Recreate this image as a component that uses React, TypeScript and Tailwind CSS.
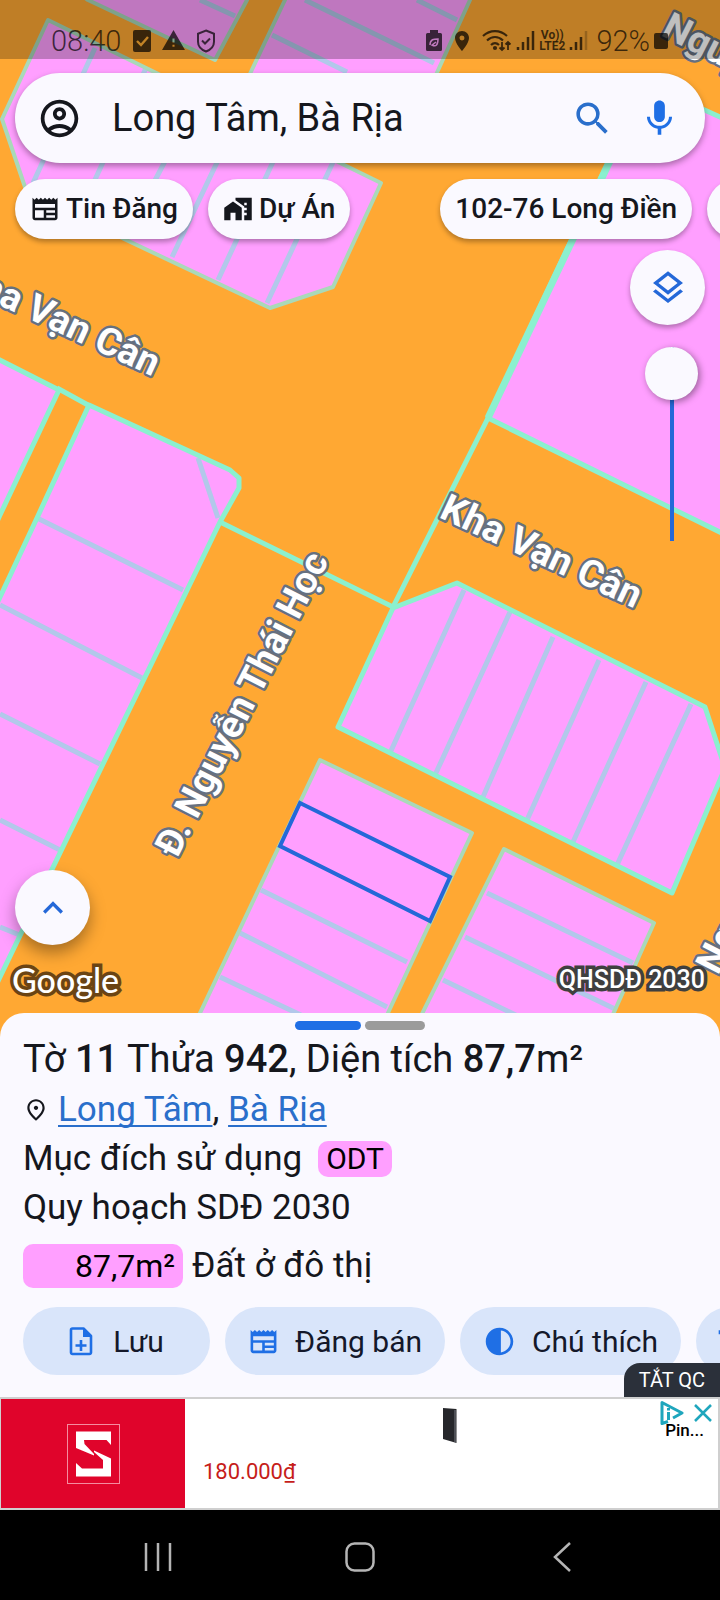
import type { ReactNode } from "react";
import {
  MdContrast,
  MdHomeWork,
  MdKeyboardArrowUp,
  MdLocationOn,
  MdMic,
  MdNewspaper,
  MdOutlineAccountCircle,
  MdOutlineLayers,
  MdOutlinePlace,
  MdSearch,
  MdTitle,
  MdWarning,
} from "react-icons/md";

type Block = { points: string; plots: string };

// blocks that touch a main road get the bright outline
const mainBlocks: Block[] = [
  { points: "645,83 740,126 740,542 488,418", plots: "" },
  { points: "-20,350 59,390 0,515 -20,558", plots: "" },
  {
    points: "89,405 230,470 239,478 239,488 220,522 0,977 -20,1018 -20,640 37,518",
    plots:
      "M198 458L218 518M37 518L183 590M0 605L142 678M0 714L100 764M0 820L60 850M0 927L22 936",
  },
  {
    points: "393,608 457,583 705,707 725,768 672,893 338,727",
    plots:
      "M464 590L390 753M510 612L435 775M553 637L483 797M599 660L527 820M646 682L573 842M691 704L617 865",
  },
];

const innerBlocks: Block[] = [
  { points: "88,0 215,60 247,0 247,-20 60,-20", plots: "M200 0L235 16" },
  {
    points: "285,0 248,78 430,88 470,0 470,-20 290,-20",
    plots: "M305 0L434 63M272 35L347 72M417 0L457 20",
  },
  {
    points: "48,20 381,183 333,287 270,308 27,193 2,119",
    plots:
      "M33 183L95 48M88 195L146 68M126 236L200 94M172 257L240 114M218 280L285 136M267 303L334 160",
  },
  {
    points: "320,760 472,833 380,1030 192,1030",
    plots: "M261 890L407 962M240 933L387 1007M220 977L320 1024",
  },
  {
    points: "504,849 654,923 606,1030 414,1030",
    plots: "M487 893L633 963M465 937L615 1009M443 980L530 1022",
  },
];

function BlockShape({ block, outline, width }: { block: Block; outline: string; width: number }) {
  return (
    <g fill="none" strokeLinejoin="round">
      <polygon points={block.points} fill="#ff9fff" />
      <path d={block.plots} stroke="#b2c8ea" strokeWidth={5} />
      <polygon points={block.points} stroke={outline} strokeWidth={width} />
    </g>
  );
}

function ParcelMap() {
  return (
    <svg
      className="absolute inset-0 size-full"
      viewBox="0 0 720 1037"
      preserveAspectRatio="xMidYMin slice"
      aria-label="Bản đồ quy hoạch"
    >
      <rect x="-400" width="1520" height="1037" fill="#ffa833" />
      {innerBlocks.map((block) => (
        <BlockShape key={block.points} block={block} outline="#a9d9b9" width={4} />
      ))}
      {mainBlocks.map((block) => (
        <BlockShape key={block.points} block={block} outline="#8bf0cf" width={5} />
      ))}
      <path
        d="M573 240L488 418L393 607L220 522M57 388L88 405"
        fill="none"
        stroke="#8bf0cf"
        strokeWidth="5"
      />
      <path d="M620 140L488 418" stroke="#8bf0cf" strokeWidth="7" />
      <polygon
        points="300,803 450,877 430,921 280,846"
        fill="none"
        stroke="#2468d8"
        strokeWidth="4"
      />
      <g
        fill="#fff"
        stroke="#667080"
        strokeWidth="5"
        strokeLinejoin="round"
        paintOrder="stroke"
        className="text-[38px] font-bold"
      >
        <text transform="translate(-44 285) rotate(25)">Kha Vạn Cân</text>
        <text transform="translate(438 517) rotate(25)">Kha Vạn Cân</text>
        <text transform="translate(177 859) rotate(-63)">Đ. Nguyễn Thái Học</text>
        <text transform="translate(660 35) rotate(27)">Nguyễn</text>
        <text transform="translate(718 976) rotate(-63)">Nguyễn</text>
      </g>
    </svg>
  );
}

function Signal({ weak }: { weak?: boolean }) {
  return (
    <svg viewBox="0 0 19 20" className="h-5 w-[19px]" fill="none" stroke="currentColor" strokeWidth="2.500">
      <path d="M2 16v3M7 11v8M12 6v13" />
      <path d="M17 0v19" opacity={weak ? 0.3 : 1} />
    </svg>
  );
}

function StatusBar() {
  return (
    <div className="flex h-[59px] items-center bg-black/25 pt-[22px] pr-[52px] pl-[51px] text-black/70">
      <time className="text-[29px] leading-9 font-light">08:40</time>
      <svg viewBox="0 0 18 22" className="ml-3 h-[22px] w-[18px]">
        <rect width="18" height="22" rx="2" fill="currentColor" />
        <path d="M4 11l4 4 7-8" fill="none" stroke="#c28326" strokeWidth="2.4" />
      </svg>
      <MdWarning className="ml-2.5 size-[25px]" />
      <svg viewBox="0 0 20 24" className="ml-2.5 h-6 w-5" fill="none" stroke="currentColor" strokeWidth="2">
        <path d="M10 1.5l8 3.2v8c0 4.600-3.400 8-8 9.800-4.600-1.800-8-5.200-8-9.800v-8z" />
        <path d="M6 11.500l3 3 5-5" />
      </svg>
      <div className="ml-auto flex items-center">
        <svg viewBox="0 0 16 21" className="h-[21px] w-4">
          <path d="M4 0h8v3h2.500a1.500 1.500 0 0 1 1.500 1.500v15a1.500 1.500 0 0 1-1.500 1.500h-13a1.500 1.500 0 0 1-1.500-1.500v-15A1.500 1.500 0 0 1 1.500 3H4z" fill="currentColor" />
          <path d="M4 15c0-6 4-6 8-6 0 6-2 8-6 6l4-3" fill="none" stroke="#c07abf" strokeWidth="1.500" />
        </svg>
        <MdLocationOn className="ml-2 size-6" />
        <svg viewBox="0 0 30 22" className="ml-2 h-[22px] w-[30px]" fill="none" stroke="currentColor" strokeWidth="2.200">
          <path d="M1 6c7-6.500 17-6.500 24 0M5 10.500c5-4.500 11-4.500 16 0M9 15c2.500-2.500 5.500-2.500 8 0" />
          <circle cx="13" cy="18" r="1" />
          <path d="M20 12v8M17.500 17.500l2.500 2.500 2.500-2.500M26 20v-8M23.500 14.500l2.500-2.500 2.500 2.500" strokeWidth="1.800" />
        </svg>
        <span className="ml-1">
          <Signal />
        </span>
        <span className="ml-1 flex flex-col items-center text-[12px] leading-[11px] font-bold">
          <span>Vo))</span>
          <span>LTE2</span>
        </span>
        <span className="ml-1">
          <Signal weak />
        </span>
        <span className="ml-2 text-[29px] leading-9 font-light">92%</span>
        <svg viewBox="0 0 14 16" className="ml-1 h-4 w-3.5">
          <rect width="14" height="16" rx="2" fill="currentColor" />
        </svg>
      </div>
    </div>
  );
}

function Chip({ className, children }: { className?: string; children?: ReactNode }) {
  return (
    <button
      type="button"
      className={`flex h-[60px] shrink-0 items-center gap-1.5 rounded-full bg-[#faf9ff] px-[15px] text-[28px] font-medium whitespace-nowrap shadow-[0_3px_5px_rgba(0,0,0,0.3)] ${className ?? ""}`}
    >
      {children}
    </button>
  );
}

function RoundButton({ label, className, children }: { label: string; className: string; children: ReactNode }) {
  return (
    <button
      type="button"
      aria-label={label}
      className={`flex size-[75px] items-center justify-center rounded-full bg-[#faf9ff] text-[#2468d8] ${className}`}
    >
      {children}
    </button>
  );
}

function ActionButton({ className, children }: { className?: string; children: ReactNode }) {
  return (
    <button
      type="button"
      className={`flex h-[68px] shrink-0 items-center justify-center gap-4 rounded-full bg-[#d9e5fa] px-[23px] text-[30px] whitespace-nowrap text-[#14182a] ${className ?? ""}`}
    >
      {children}
    </button>
  );
}

function NoteAddIcon() {
  return (
    <svg viewBox="0 0 24 30" className="mr-1 h-[30px] w-6" fill="none" stroke="#1f6fe5" strokeWidth="2.600">
      <path d="M14.500 2.500H3.500a1.500 1.500 0 0 0-1.500 1.500v22.500A1.500 1.500 0 0 0 3.500 28h17a1.500 1.500 0 0 0 1.500-1.500V10z" strokeLinejoin="round" />
      <path d="M14 2v9h8z" fill="#1f6fe5" stroke="none" />
      <path d="M12 14v11M6.500 19.500h11" />
    </svg>
  );
}

function ParcelSheet() {
  return (
    <section className="relative -mt-6 overflow-hidden rounded-t-3xl bg-[#faf9ff] pt-2 pb-[22px] pl-[23px] text-[35px] text-[#15171d]">
      <div className="flex justify-center gap-1 pr-[23px]">
        <span className="h-[9px] w-[66px] rounded-full bg-[#1f6fe5]" />
        <span className="h-[9px] w-[60px] rounded-full bg-[#9b9b9b]" />
      </div>
      <h1 className="mt-1 text-[38px] leading-[50px] whitespace-nowrap">
        Tờ <b className="font-medium">11</b> Thửa <b className="font-medium">942</b>, Diện tích{" "}
        <b className="font-medium">87,7</b>m²
      </h1>
      <p className="mt-px flex items-center leading-[49px]">
        <MdOutlinePlace className="mr-[9px] size-[26px]" />
        <span>
          <a href="#long-tam" className="text-[#2a6fcb] underline decoration-2 underline-offset-4 [text-decoration-skip-ink:none]">
            Long Tâm
          </a>
          ,{" "}
          <a href="#ba-ria" className="text-[#2a6fcb] underline decoration-2 underline-offset-4 [text-decoration-skip-ink:none]">
            Bà Rịa
          </a>
        </span>
      </p>
      <p className="flex items-center gap-4 leading-[49px]">
        Mục đích sử dụng
        <span className="rounded-[10px] bg-[#ff9fff] px-2 text-[30px] leading-9 text-black">ODT</span>
      </p>
      <p className="leading-[49px]">Quy hoạch SDĐ 2030</p>
      <p className="mt-3 flex items-center gap-[9px] leading-[44px]">
        <span className="w-40 rounded-[10px] bg-[#ff9fff] pr-2 text-right text-[32px] text-black">87,7m²</span>
        Đất ở đô thị
      </p>
      <div className="mt-[19px] flex gap-[15px]">
        <ActionButton className="w-[187px]">
          <NoteAddIcon />
          Lưu
        </ActionButton>
        <ActionButton>
          <MdNewspaper className="size-[31px] text-[#1f6fe5]" />
          Đăng bán
        </ActionButton>
        <ActionButton>
          <MdContrast className="size-[33px] text-[#1f6fe5]" />
          Chú thích
        </ActionButton>
        <button
          type="button"
          aria-label="Chữ"
          className="flex h-[68px] w-[120px] shrink-0 items-center rounded-full bg-[#d9e5fa] pl-4 text-[#1f6fe5]"
        >
          <MdTitle className="size-8" />
        </button>
      </div>
      <button
        type="button"
        className="absolute right-0 bottom-0 h-[34px] rounded-tl-2xl bg-[#2b303a] px-[15px] text-[20px] text-white"
      >
        TẮT QC
      </button>
    </section>
  );
}

function AdBanner() {
  return (
    <aside className="relative flex h-[113px] border-2 border-l border-[#cfcfcf] bg-white">
      <div className="flex w-[184px] items-center justify-center bg-[#e0042b]">
        <svg viewBox="0 0 53 60" className="h-[60px] w-[53px]">
          <rect x="0.500" y="0.500" width="52" height="59" fill="none" stroke="#f58ca0" />
          <path
            d="M9 7.500H44V21L39.500 16H17L17.500 20L27 30V26.500L44 34.500V52.500H9V39L15 44.500H36V36L27 28V31.500L9 24z"
            fill="#fff"
          />
        </svg>
      </div>
      <p className="self-end pb-5 pl-[18px] text-[22px] leading-8 text-[#c61d1a]">180.000₫</p>
      <svg viewBox="0 0 14 36" className="mt-2 ml-auto h-9 w-3.5">
        <path d="M0 1l13.500 1v34L0 32z" fill="#26272b" />
        <path d="M12 3v32" stroke="#777b82" strokeWidth="1" />
      </svg>
      <p className="mt-[21px] mr-[14px] ml-[208px] text-[17px] leading-5 font-medium text-black">Pin...</p>
      <div className="absolute top-0.5 right-1.5 flex items-center gap-2.5 text-[#1fa6bd]">
        <svg viewBox="0 0 24 24" className="size-6" fill="none" stroke="currentColor" strokeWidth="3">
          <path d="M8 20.500L2 22.500v-21L22 12l-9 5" strokeLinejoin="round" />
          <path d="M8.500 11v8M8.500 7v2.500" />
        </svg>
        <button type="button" aria-label="Đóng quảng cáo">
          <svg viewBox="0 0 18 18" className="size-[18px]" stroke="currentColor" strokeWidth="2.500">
            <path d="M1 1l16 16M17 1L1 17" />
          </svg>
        </button>
      </div>
    </aside>
  );
}

function NavBar() {
  return (
    <nav className="grid h-[90px] grid-cols-3 place-items-center bg-black px-[8%] pt-1 text-[#b5b5b5]">
      <button type="button" aria-label="Gần đây">
        <svg viewBox="0 0 30 30" className="size-[30px]" stroke="currentColor" strokeWidth="2.500">
          <path d="M3 1v28M15 1v28M27 1v28" />
        </svg>
      </button>
      <button type="button" aria-label="Trang chủ">
        <svg viewBox="0 0 30 30" className="size-[30px]" fill="none" stroke="currentColor" strokeWidth="2.500">
          <rect x="1.500" y="1.500" width="27" height="27" rx="8" />
        </svg>
      </button>
      <button type="button" aria-label="Quay lại">
        <svg viewBox="0 0 30 30" className="size-[30px]" fill="none" stroke="currentColor" strokeWidth="2.500">
          <path d="M23 1L8 15l15 14" />
        </svg>
      </button>
    </nav>
  );
}

export default function App() {
  return (
    <div className="flex min-h-screen flex-col overflow-hidden bg-black font-['Roboto','Noto_Sans',sans-serif] text-[#15171d]">
      <main className="relative flex flex-1 flex-col overflow-hidden">
        <ParcelMap />
        <div className="relative flex flex-1 flex-col">
          <StatusBar />

          <search className="mx-[15px] mt-3.5 flex h-[90px] items-center rounded-full bg-[#faf9ff] pr-6 pl-[22px] shadow-[0_3px_6px_rgba(0,0,0,0.35)]">
            <button type="button" aria-label="Tài khoản">
              <MdOutlineAccountCircle className="size-[45px]" />
            </button>
            <input
              type="text"
              aria-label="Tìm kiếm"
              defaultValue="Long Tâm, Bà Rịa"
              className="ml-[30px] min-w-0 flex-1 text-[38px] outline-none"
            />
            <button type="button" aria-label="Tìm" className="text-[#2a6fcb]">
              <MdSearch className="size-[43px]" />
            </button>
            <button type="button" aria-label="Giọng nói" className="ml-6 text-[#1f6fe5]">
              <MdMic className="size-[43px]" />
            </button>
          </search>

          <div className="mt-4 flex gap-[15px] pl-[15px]">
            <Chip>
              <MdNewspaper className="size-[30px]" />
              Tin Đăng
            </Chip>
            <Chip>
              <MdHomeWork className="size-[30px]" />
              Dự Án
            </Chip>
            <Chip className="ml-[75px]">102-76 Long Điền</Chip>
            <Chip className="w-[180px]" />
          </div>

          <RoundButton label="Lớp bản đồ" className="mt-[11px] mr-[15px] self-end shadow-[0_3px_5px_rgba(0,0,0,0.3)]">
            <MdOutlineLayers className="size-10" />
          </RoundButton>
          <input
            type="range"
            aria-label="Độ trong suốt"
            defaultValue={0}
            className="mt-[22px] mr-[22px] h-[194px] w-[53px] appearance-none self-end bg-[linear-gradient(#2468d8,#2468d8)] bg-[length:4px_100%] bg-center bg-no-repeat [writing-mode:vertical-lr] [&::-webkit-slider-thumb]:size-[53px] [&::-webkit-slider-thumb]:appearance-none [&::-webkit-slider-thumb]:rounded-full [&::-webkit-slider-thumb]:bg-[#faf9ff] [&::-webkit-slider-thumb]:shadow-[2px_2px_7px_rgba(0,0,0,0.4)]"
          />

          <RoundButton label="Mở rộng" className="mt-auto ml-[15px] shadow-[0_8px_16px_rgba(0,0,0,0.35)]">
            <MdKeyboardArrowUp className="size-10" />
          </RoundButton>
          <div className="mt-4 flex items-center justify-between pr-[15px] pb-[38px] pl-3 text-white [paint-order:stroke]">
            <span className="font-['Lato'] text-[34px] leading-[38px] font-medium [-webkit-text-stroke:7px_#6b4414]">
              Google
            </span>
            <span className="text-[25px] leading-[38px] font-medium [-webkit-text-stroke:7px_#3f3f3f]">
              QHSDĐ 2030
            </span>
          </div>
        </div>
      </main>
      <ParcelSheet />
      <AdBanner />
      <NavBar />
    </div>
  );
}
